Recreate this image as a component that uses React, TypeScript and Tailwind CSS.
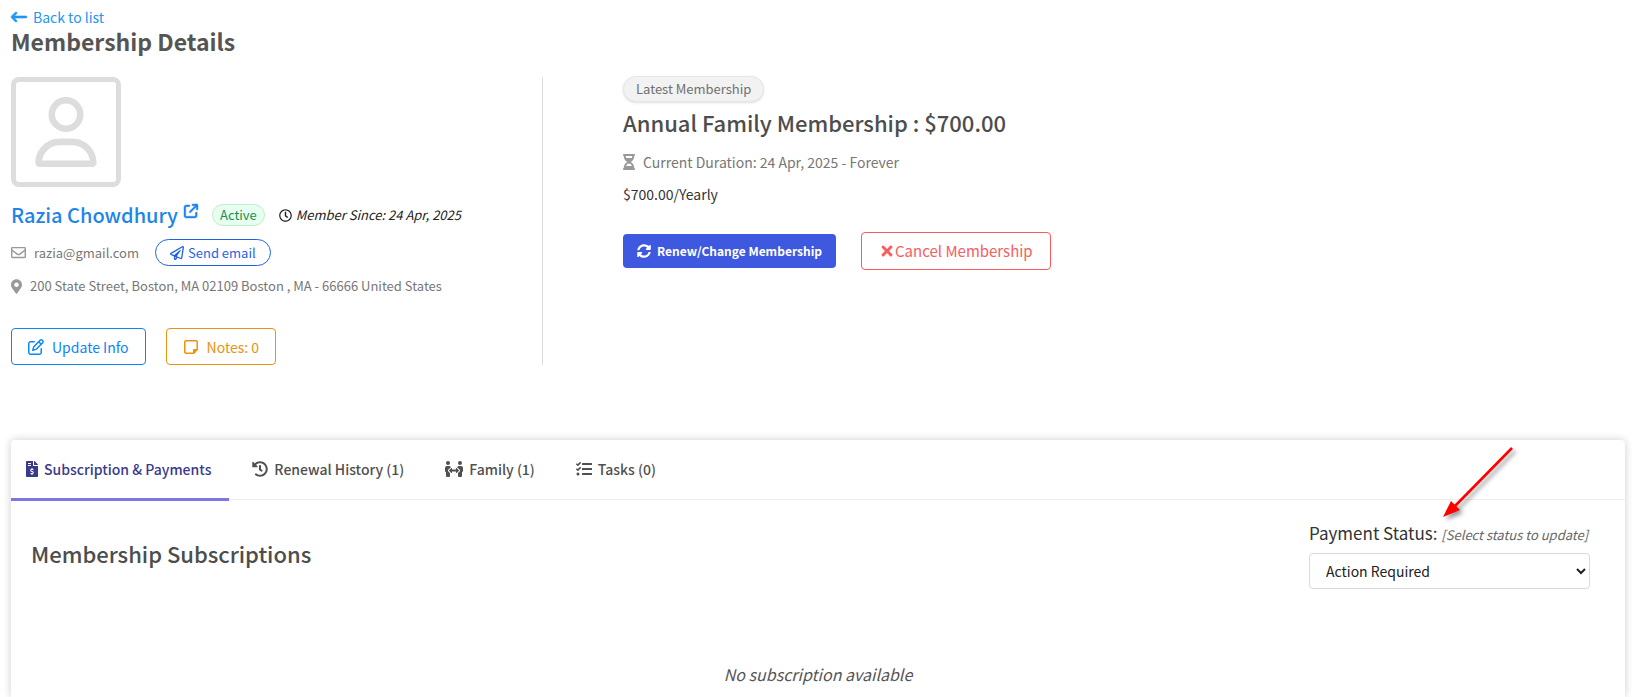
import { useState } from 'react';
import type { ReactNode } from 'react';
import clsx from 'clsx';
import {
  FaFileInvoiceDollar,
  FaHistory,
  FaHourglassHalf,
  FaMapMarkerAlt,
  FaPeopleArrows,
  FaRegClock,
  FaRegEnvelope,
  FaRegPaperPlane,
  FaSyncAlt,
  FaTasks,
  FaTimes,
} from 'react-icons/fa';
import {
  FaArrowLeftLong,
  FaArrowUpRightFromSquare,
  FaRegNoteSticky,
  FaRegPenToSquare,
  FaRegUser,
} from 'react-icons/fa6';

interface ITab {
  id: string;
  label: string;
  icon: ReactNode;
}

const tabs: ITab[] = [
  {
    id: 'subscription',
    label: 'Subscription & Payments',
    icon: <FaFileInvoiceDollar className="h-4 w-3" />,
  },
  {
    id: 'renewal',
    label: 'Renewal History (1)',
    icon: <FaHistory size={16} />,
  },
  { id: 'family', label: 'Family (1)', icon: <FaPeopleArrows size={18} /> },
  { id: 'tasks', label: 'Tasks (0)', icon: <FaTasks size={16} /> },
];

const statuses = ['Action Required', 'Pending', 'Paid', 'Failed'];

function MemberInfo() {
  return (
    <section className="w-[532px] shrink-0 border-r border-[#dcdcdc]">
      <div className="flex size-[110px] items-center justify-center rounded-lg border-5 border-[#dddddd] text-[#dddddd]">
        <FaRegUser size={70} />
      </div>

      <div className="mt-3 flex h-8 items-center">
        <a
          href="#profile"
          className="flex items-center gap-1.5 text-xl leading-8 font-medium text-[#2185e8]"
        >
          Razia Chowdhury
          <FaArrowUpRightFromSquare
            size={14}
            strokeWidth={16}
            className="mb-2 overflow-visible"
          />
        </a>
        <span className="ml-3.5 rounded-full border border-[#c3edc8] bg-[#e6fff0] px-[7px] text-[13px] leading-5 text-[#1c8f52]">
          Active
        </span>
        <span className="ml-3.5 flex items-center gap-1 text-[13px] leading-5 text-[#212121] italic">
          <FaRegClock size={13} />
          Member Since: 24 Apr, 2025
        </span>
      </div>

      <div className="mt-2 flex items-center gap-2 text-[13px] leading-5 text-[#777777]">
        <FaRegEnvelope size={15} className="text-[#999999]" />
        razia@gmail.com
        <button
          type="button"
          className="ml-2 flex h-[27px] items-center gap-1 rounded-full border border-[#1f62e6] px-3.5 text-[#1f62e6]"
        >
          <FaRegPaperPlane size={14} />
          Send email
        </button>
      </div>

      <p className="mt-2 flex items-center gap-2 text-[13px] leading-6 text-[#777777]">
        <FaMapMarkerAlt className="h-[15px] w-[11px] text-[#999999]" />
        200 State Street, Boston, MA 02109 Boston , MA - 66666 United States
      </p>

      <div className="mt-[30px] flex gap-5">
        <button
          type="button"
          className="flex h-[37px] items-center gap-2 rounded-sm border border-[#0d86f5] px-4 text-sm text-[#0d86f5]"
        >
          <FaRegPenToSquare size={16} />
          Update Info
        </button>
        <button
          type="button"
          className="flex h-[37px] items-center gap-2 rounded-sm border border-[#ea9310] px-4 text-sm text-[#ea9310]"
        >
          <FaRegNoteSticky size={16} />
          Notes: 0
        </button>
      </div>
    </section>
  );
}

function LatestMembership() {
  return (
    <section className="-mt-px pl-20">
      <span className="flex w-fit rounded-full border border-[#e6e6e6] bg-[#f2f2f2] px-3 text-[13px] leading-6 text-[#707070] shadow-sm">
        Latest Membership
      </span>
      <h2 className="mt-1 text-[22px] leading-8 font-medium text-[#4d4d4d]">
        Annual Family Membership : $700.00
      </h2>
      <p className="mt-3 flex items-center gap-2 text-sm leading-6 text-[#777777]">
        <FaHourglassHalf className="h-4 w-3 text-[#999999]" />
        Current Duration: 24 Apr, 2025 - Forever
      </p>
      <p className="mt-2 text-sm leading-6 text-[#333333]">$700.00/Yearly</p>
      <div className="mt-[26px] flex items-center gap-[25px]">
        <button
          type="button"
          className="flex h-[34px] items-center gap-1.5 rounded-sm bg-[#3f58e0] px-3.5 text-xs font-bold text-white"
        >
          <FaSyncAlt size={14} />
          Renew/Change Membership
        </button>
        <button
          type="button"
          className="flex h-[38px] items-center rounded-sm border border-[#fa5c5c] px-[17px] text-[15px] text-[#fa5c5c]"
        >
          <FaTimes size={16} />
          Cancel Membership
        </button>
      </div>
    </section>
  );
}

function AnnotationArrow() {
  return (
    <svg
      viewBox="0 0 76 80"
      className="pointer-events-none absolute top-1.5 right-[110px] h-20 w-[76px] drop-shadow-[3px_3px_2px_rgba(0,0,0,0.4)]"
      aria-hidden="true"
    >
      <path d="M73 2 16 60" stroke="#fe0000" strokeWidth="2.6" fill="none" />
      <path d="M4 71 12 55 21 64Z" fill="#fe0000" />
    </svg>
  );
}

export default function App() {
  const [activeTab, setActiveTab] = useState('subscription');
  const [status, setStatus] = useState(statuses[0]);

  return (
    <main className="flex min-h-screen flex-col bg-white px-[11px] pt-[5px] font-['Noto_Sans_CJK_SC',sans-serif]">
      <a
        href="#list"
        className="flex w-fit items-center gap-1.5 text-sm leading-6 text-[#2196f3]"
      >
        <FaArrowLeftLong
          size={16}
          strokeWidth={20}
          className="overflow-visible"
        />
        Back to list
      </a>
      <h1 className="text-[23px] leading-6 font-bold text-[#555555]">
        Membership Details
      </h1>

      <div className="mt-6 flex">
        <MemberInfo />
        <LatestMembership />
      </div>

      <div className="relative mt-[75px] mr-[3px] grow rounded-t-sm bg-white shadow-[0_0_8px_rgba(0,0,0,0.2)]">
        <nav className="flex h-[60px] gap-2 border-b border-[#eeeeee]">
          {tabs.map((tab) => (
            <button
              key={tab.id}
              type="button"
              onClick={() => setActiveTab(tab.id)}
              className={clsx(
                'flex h-[61px] items-center gap-1.5 border-b-3 pr-[18px] pl-[15px] text-sm font-medium',
                activeTab === tab.id
                  ? 'border-[#7c78e0] text-[#3a3a8c]'
                  : 'border-transparent text-[#505050]',
              )}
            >
              {tab.icon}
              {tab.label}
            </button>
          ))}
        </nav>

        <div className="flex items-start justify-between pt-[19px] pr-[35px] pl-5">
          <h2 className="mt-4 text-[22px] leading-9 font-medium text-[#4d4d4d]">
            Membership Subscriptions
          </h2>
          <div className="flex w-[281px] flex-col">
            <label
              htmlFor="payment-status"
              className="text-[17px] leading-7 whitespace-nowrap text-[#333333]"
            >
              Payment Status:{' '}
              <i className="text-[13px] text-[#666666]">
                [Select status to update]
              </i>
            </label>
            <select
              id="payment-status"
              value={status}
              onChange={(e) => setStatus(e.target.value)}
              className="mt-1 h-9 rounded-sm border border-[#d9d9d9] bg-white pl-3 text-sm text-[#212121]"
            >
              {statuses.map((item) => (
                <option key={item}>{item}</option>
              ))}
            </select>
          </div>
        </div>

        <p className="pt-[71px] text-center text-base leading-7 text-[#555555] italic">
          No subscription available
        </p>

        <AnnotationArrow />
      </div>
    </main>
  );
}
